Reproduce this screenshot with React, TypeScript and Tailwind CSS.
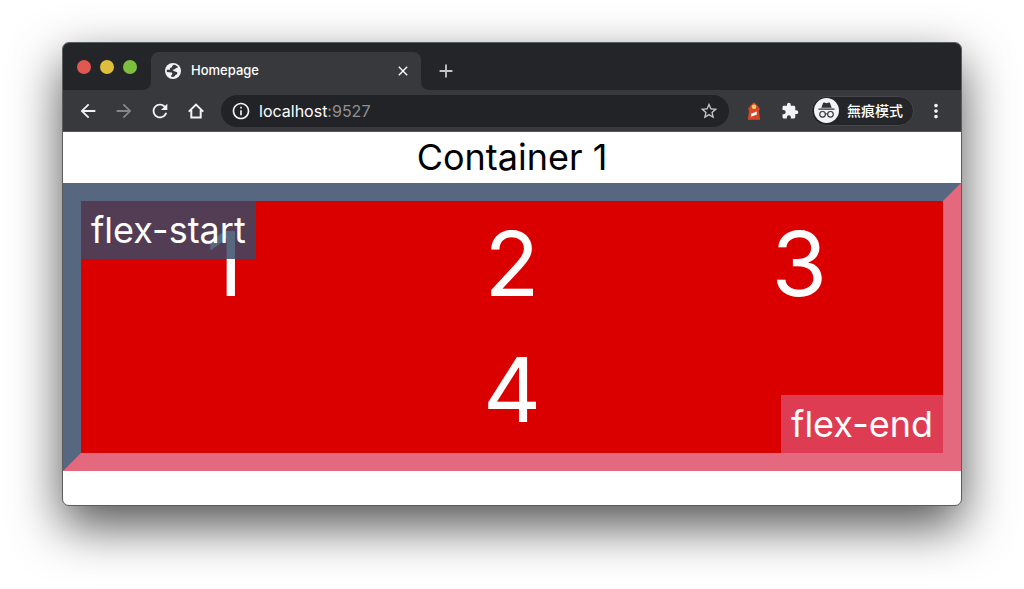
import {
  MdAdd,
  MdArrowBack,
  MdArrowForward,
  MdClose,
  MdExtension,
  MdInfoOutline,
  MdMoreVert,
  MdRefresh,
  MdStarBorder,
} from "react-icons/md";

const items = ["1", "2", "3", "4"];

function GlobeIcon() {
  return (
    <svg viewBox="0 0 16 16" className="size-4 shrink-0" aria-hidden="true">
      <circle cx="8" cy="8" r="8" fill="#f1f3f4" />
      <path
        d="M9 1.7C10.800 2 12.200 2.900 13 4.200L11.600 5C10.400 4.900 10.500 6 9.600 6.300L7.400 7.100 9.300 8.200 12.200 9.300C12.600 11 11.600 11.900 10.400 12.100 10 13.500 8.400 14.300 6.400 13.900L6.200 12.200C7.400 11.800 7.800 10.200 6.800 9.400L1.900 9.100C1.700 8.300 1.700 7.500 1.900 6.800L4.800 6.700C4.700 5.200 5.600 4.500 7.100 4.300 7 3 7.600 2 9 1.700Z"
        fill="#38393d"
      />
    </svg>
  );
}

function HomeIcon() {
  return (
    <svg
      viewBox="0 0 22 22"
      className="size-[22px]"
      fill="none"
      stroke="currentColor"
      strokeWidth="2"
      aria-hidden="true"
    >
      <path d="M3.800 11.600 11 4.600l7.200 7M6.300 10v7.400h9.400V10" />
    </svg>
  );
}

function LighthouseIcon() {
  return (
    <svg viewBox="0 0 14 18" className="h-[18px] w-[14px]" aria-hidden="true">
      <path d="M2.600 4.400 5.600 1.600 7 .4l1.400 1.200 3 2.800v1.400h1.200v2.400H1.400V5.800h1.200z" fill="#d84727" />
      <path d="M2.200 8h9.600l1.300 9.800H.9z" fill="#d84727" />
      <circle cx="7" cy="4.800" r="2.200" fill="#f4d35e" />
      <path d="m4 11.800 5.800-2.200v2.800L4 14.800z" fill="#fff" />
    </svg>
  );
}

function IncognitoIcon() {
  return (
    <svg viewBox="0 0 24 24" className="size-[25px]" aria-hidden="true">
      <circle cx="12" cy="12" r="12" fill="#f1f3f4" />
      <path
        d="M8.600 5c.2-.6.7-.8 1.300-.6l2.100.6 2.100-.6c.6-.2 1.100 0 1.300.6L17 9.300H7z"
        fill="#303134"
      />
      <path d="M4.300 10h15.400v1.200H4.300z" fill="#303134" />
      <g fill="none" stroke="#303134" strokeWidth="1.100">
        <circle cx="8.200" cy="15.700" r="2.700" />
        <circle cx="15.800" cy="15.700" r="2.700" />
        <path d="M10.900 15.500q1.100-.8 2.200 0" />
      </g>
    </svg>
  );
}

function TabStrip() {
  return (
    <div className="flex h-[47px] bg-[#38393d]">
      <div className="flex items-center gap-[9px] rounded-br-lg bg-[#242529] px-[14px]">
        <button aria-label="Close window" className="size-[14px] rounded-full bg-[#e0584f]" />
        <button aria-label="Minimize window" className="size-[14px] rounded-full bg-[#dfbd3d]" />
        <button aria-label="Zoom window" className="size-[14px] rounded-full bg-[#7cc03e]" />
      </div>
      <div className="bg-[#242529] pt-[9px]">
        <div className="flex h-[38px] w-[270px] items-center rounded-t-lg bg-[#38393d] pr-[10px] pl-[14px] text-white">
          <GlobeIcon />
          <span className="ml-[10px] flex-1 text-[13px] font-medium">Homepage</span>
          <button aria-label="Close tab">
            <MdClose className="size-4" />
          </button>
        </div>
      </div>
      <div className="flex flex-1 items-center rounded-bl-lg bg-[#242529] pt-[9px] pl-[14px]">
        <button aria-label="New tab" className="text-[#c4c6c9]">
          <MdAdd className="size-[22px]" />
        </button>
      </div>
    </div>
  );
}

function Toolbar() {
  return (
    <div className="flex h-[42px] items-center border-b border-[#55565a] bg-[#38393d] px-[14px] text-[#f1f3f4]">
      <div className="flex items-center gap-[14px]">
        <button aria-label="Back">
          <MdArrowBack className="size-[22px]" />
        </button>
        <button aria-label="Forward" className="text-[#85868a]">
          <MdArrowForward className="size-[22px]" />
        </button>
        <button aria-label="Reload">
          <MdRefresh className="size-[22px]" />
        </button>
        <button aria-label="Home">
          <HomeIcon />
        </button>
      </div>
      <div className="ml-[14px] flex h-8 flex-1 items-center rounded-full bg-[#222327] px-[10px]">
        <MdInfoOutline className="size-5" />
        <p className="ml-2 flex-1 text-base text-white">
          localhost<span className="text-[#909194]">:9527</span>
        </p>
        <button aria-label="Bookmark this page" className="text-[#c4c6c9]">
          <MdStarBorder className="size-5" />
        </button>
      </div>
      <div className="ml-[18px] flex items-center">
        <button aria-label="Lighthouse">
          <LighthouseIcon />
        </button>
        <button aria-label="Extensions" className="ml-5">
          <MdExtension className="size-[18px]" />
        </button>
        <div className="ml-3 flex h-[30px] items-center gap-2 rounded-full border border-[#45464a] bg-[#242529] pr-[10px] pl-[2px] text-sm font-medium text-white">
          <IncognitoIcon />
          無痕模式
        </div>
        <button aria-label="Menu" className="ml-[11px]">
          <MdMoreVert className="size-[22px]" />
        </button>
      </div>
    </div>
  );
}

function App() {
  return (
    <div className="min-h-screen bg-white px-[62px] pt-[42px] pb-[82px] font-['Inter','Noto_Sans_CJK_TC',sans-serif]">
      <div className="overflow-hidden rounded-[7px] border border-[#5b5c5e] bg-white shadow-[0_20px_50px_rgba(0,0,0,0.68)]">
        <TabStrip />
        <Toolbar />
        <main className="pb-[34px]">
          <h1 className="text-center text-4xl leading-[51px] text-black">Container 1</h1>
          <div className="relative border-[18px] border-t-[#364966]/83 border-r-[#de4964]/82 border-b-[#de4964]/82 border-l-[#364966]/83 bg-[#da0000] bg-clip-padding text-white">
            <div className="flex flex-wrap justify-center">
              {items.map((item) => (
                <div key={item} className="w-1/3 text-center text-[90px] leading-[126px]">
                  {item}
                </div>
              ))}
            </div>
            <span className="absolute top-0 left-0 bg-[#364966]/83 px-[10px] text-4xl leading-[58px]">
              flex-start
            </span>
            <span className="absolute right-0 bottom-0 bg-[#de4964]/82 px-[10px] text-4xl leading-[58px]">
              flex-end
            </span>
          </div>
        </main>
      </div>
    </div>
  );
}

export default App;
